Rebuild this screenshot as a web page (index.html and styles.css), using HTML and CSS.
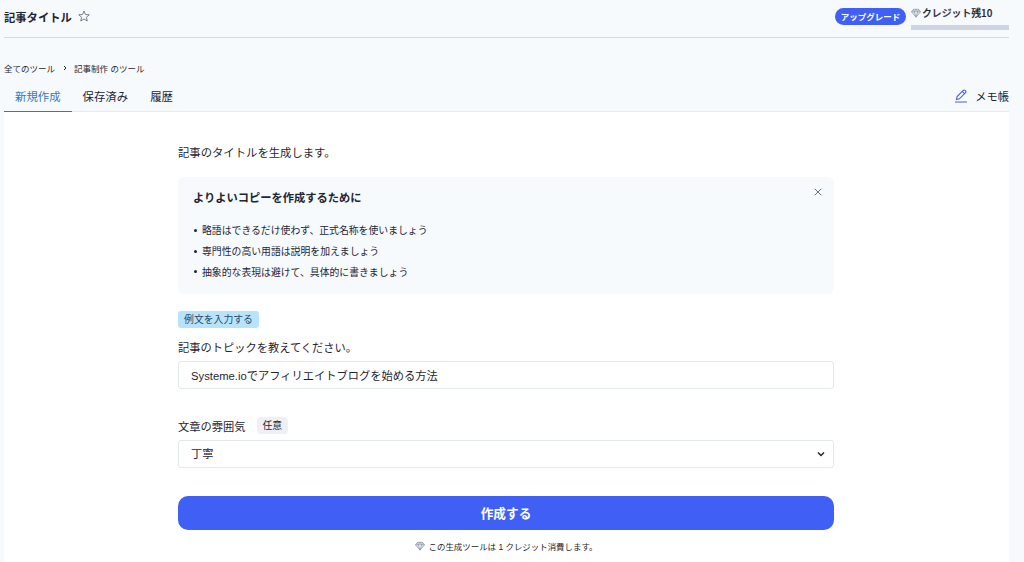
FILE: index.html
```
<!DOCTYPE html>
<html lang="ja">
<head>
    <meta charset="UTF-8">
    <meta name="viewport" content="width=device-width, initial-scale=1.0">
    <title>記事タイトル</title>
    <link rel="stylesheet" href="styles.css">
</head>
<body>
    <div class="page">
        <header class="header">
            <h1>記事タイトル</h1>
            <svg class="star" viewBox="0 0 24 24"><path d="M12 2l3 7 7.500.6-5.700 5 1.700 7.400L12 18l-6.500 4 1.700-7.400-5.700-5L9 9z"/></svg>
            <button class="upgrade">アップグレード</button>
            <div class="credit">
                <div class="credit-label">
                    <svg class="gem" viewBox="0 0 24 24"><path d="M6 3h12l5 6-11 13L1 9zM1 9h22M6 3l2 6 4 13 4-13 2-6M8 9l4-6 4 6"/></svg>
                    <span>クレジット残10</span>
                </div>
                <div class="credit-bar"></div>
            </div>
        </header>

        <nav class="breadcrumb">
            <a>全てのツール</a>
            <svg class="arrow" viewBox="0 0 6 8"><path d="M2 2l2 2-2 2"/></svg>
            <a>記事制作 のツール</a>
        </nav>

        <div class="tabs">
            <button class="tab-button active">新規作成</button>
            <button class="tab-button">保存済み</button>
            <button class="tab-button">履歴</button>
            <button class="memo">
                <svg class="pencil" viewBox="0 0 14 14"><path d="M2.500 10.500l.6-3L9.300 1.300a1.200 1.200 0 0 1 1.700 0l.6.600a1.200 1.200 0 0 1 0 1.700L5.400 9.800zM8.200 2.400l2.300 2.300M1 13h12"/></svg>
                <span>メモ帳</span>
            </button>
        </div>

        <main class="content">
            <form class="tool-form">
                <p class="description">記事のタイトルを生成します。</p>

                <section class="tips">
                    <div class="tips-head">
                        <h2>よりよいコピーを作成するために</h2>
                        <svg class="close" viewBox="0 0 8 8"><path d="M.8.800l6.400 6.400M7.200.8L.8 7.200"/></svg>
                    </div>
                    <ul>
                        <li>略語はできるだけ使わず、正式名称を使いましょう</li>
                        <li>専門性の高い用語は説明を加えましょう</li>
                        <li>抽象的な表現は避けて、具体的に書きましょう</li>
                    </ul>
                </section>

                <button type="button" class="example">例文を入力する</button>

                <label class="label" for="topic">記事のトピックを教えてください。</label>
                <input class="field" type="text" id="topic" value="Systeme.ioでアフィリエイトブログを始める方法">

                <label class="label tone-label" for="tone">文章の雰囲気 <span class="optional">任意</span></label>
                <div class="select-wrap">
                    <select class="field" id="tone">
                        <option>丁寧</option>
                    </select>
                    <svg class="chevron" viewBox="0 0 8 6"><path d="M1 1.500l3 3 3-3"/></svg>
                </div>

                <button type="button" class="submit">作成する</button>

                <p class="cost">
                    <svg class="gem" viewBox="0 0 24 24"><path d="M6 3h12l5 6-11 13L1 9zM1 9h22M6 3l2 6 4 13 4-13 2-6M8 9l4-6 4 6"/></svg>
                    <span>この生成ツールは 1 クレジット消費します。</span>
                </p>
            </form>
        </main>
    </div>
</body>
</html>
```

FILE: styles.css
```
* {
    box-sizing: border-box;
}

body {
    margin: 0;
    height: 100vh;
    overflow: hidden;
    background-color: #f6fafd;
    color: #1f2533;
    font-family: "Liberation Sans", "Noto Sans CJK JP", sans-serif;
    font-size: 11.25px;
}

h1, h2, p, ul {
    margin: 0;
    padding: 0;
}

button, input, select {
    font-family: inherit;
    font-size: inherit;
    color: inherit;
    border: none;
    background: none;
    padding: 0;
}

svg {
    display: block;
    fill: none;
    stroke: currentColor;
    flex-shrink: 0;
}

.page {
    width: 1005px;
    height: 100%;
    margin-left: 4px;
    display: flex;
    flex-direction: column;
}

.header {
    display: flex;
    align-items: center;
    height: 38px;
    padding-bottom: 4px;
    border-bottom: 1px solid #d3dae3;
}

.header h1 {
    font-size: 11.3px;
    font-weight: bold;
}

.star {
    width: 12px;
    height: 12px;
    margin: 0 0 1px 6px;
    color: #6b7280;
    stroke-width: 1.8;
}

.upgrade {
    width: 71px;
    height: 17px;
    margin-left: auto;
    padding-bottom: 2px;
    border-radius: 9px;
    background-color: #405ff5;
    color: #fff;
    font-size: 8.5px;
    font-weight: bold;
}

.credit {
    width: 98px;
    margin-left: 5px;
    padding-top: 2px;
}

.credit-label {
    display: flex;
    align-items: center;
    gap: 1px;
    height: 14px;
    margin-bottom: 5px;
    font-family: "Noto Sans CJK JP", sans-serif;
    font-size: 9.85px;
    font-weight: 500;
    -webkit-text-stroke: 0.2px;
}

.gem {
    width: 10px;
    height: 10px;
    color: #8d97a8;
    fill: #e3e8ef;
    stroke-width: 1.8;
}

.credit-bar {
    height: 5px;
    background-color: #ccd5e1;
}

.breadcrumb {
    display: flex;
    align-items: center;
    height: 14px;
    margin-top: 23px;
    font-size: 8.5px;
}

.arrow {
    width: 6px;
    height: 8px;
    margin: 0 6px 0 7px;
}

.tabs {
    display: flex;
    height: 37px;
    padding-top: 7px;
    border-bottom: 1px solid #e6ebf1;
}

.tab-button {
    height: 30px;
    padding: 0 11px 2px;
    font-size: 11.4px;
}

.tab-button.active {
    padding-bottom: 1px;
    color: #3976b8;
    border-bottom: 1px solid #3976b8;
}

.memo {
    display: flex;
    align-items: center;
    gap: 7px;
    height: 27px;
    margin-left: auto;
}

.pencil {
    width: 14px;
    height: 14px;
    color: #4a5fd8;
    stroke-width: 1.1;
}

.content {
    flex: 1;
    background-color: #fff;
}

.tool-form {
    width: 656px;
    margin-left: 174px;
    padding-top: 33px;
}

.description {
    height: 17px;
    font-size: 11.35px;
    line-height: 17px;
}

.tips {
    height: 117px;
    margin-top: 15px;
    padding: 13px 12px 0 15px;
    border-radius: 6px;
    background-color: #f6fafd;
}

.tips-head {
    display: flex;
    justify-content: space-between;
    height: 17px;
}

.tips-head h2 {
    font-size: 11.25px;
    font-weight: bold;
    line-height: 17px;
}

.close {
    width: 8px;
    height: 8px;
    margin-top: -2px;
    color: #6b7280;
}

.tips ul {
    margin-top: 13px;
    list-style: none;
}

.tips li {
    display: flex;
    align-items: center;
    gap: 5px;
    height: 20.7px;
    padding-left: 1px;
    font-size: 9.85px;
}

.tips li::before {
    content: "";
    width: 3px;
    height: 3px;
    border-radius: 50%;
    background-color: #1f2533;
}

.example {
    display: block;
    width: 81px;
    height: 17px;
    margin-top: 17px;
    border-radius: 3px;
    background-color: #b9e3fb;
    color: #254a6b;
    font-size: 9.85px;
    line-height: 17px;
}

.label {
    display: flex;
    align-items: center;
    height: 17px;
    margin: 10px 0 6px;
}

.field {
    display: block;
    width: 100%;
    height: 28px;
    padding: 0 12px;
    border: 1px solid #e2e8ec;
    border-radius: 3px;
    background-color: #fff;
}

.tone-label {
    margin-top: 28px;
}

.optional {
    height: 17px;
    margin-left: 11px;
    padding: 0 6px;
    border-radius: 4px;
    background-color: #edf1f7;
    font-size: 9.85px;
    line-height: 18px;
}

.select-wrap {
    position: relative;
}

.select-wrap select {
    appearance: none;
}

.chevron {
    position: absolute;
    right: 9px;
    top: 11px;
    width: 8px;
    height: 6px;
    stroke-width: 1.5;
}

.submit {
    display: block;
    width: 100%;
    height: 34px;
    margin-top: 28px;
    padding-bottom: 2px;
    border-radius: 10px;
    background-color: #405ff5;
    color: #fff;
    font-size: 12.65px;
    font-weight: bold;
}

.cost {
    display: flex;
    align-items: center;
    justify-content: center;
    gap: 4px;
    height: 14px;
    margin-top: 9px;
    font-size: 8.45px;
}
```
